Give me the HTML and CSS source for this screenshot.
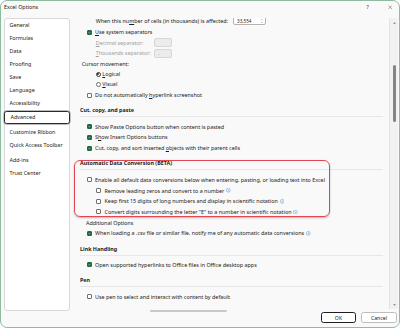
FILE: index.html
```html
<!DOCTYPE html>
<html lang="en">
<head>
    <meta charset="UTF-8">
    <title>Excel Options</title>
    <link rel="stylesheet" href="styles.css">
</head>
<body>
<div class="window">
    <div class="titlebar">
        <span class="title">Excel Options</span>
        <span class="help">?</span>
        <svg class="close" viewBox="0 0 10 10"><path d="M1 1 L9 9 M9 1 L1 9" stroke="#333" stroke-width="0.9" fill="none"/></svg>
    </div>
    <div class="body">
        <div class="nav">
            <div class="nav-item">General</div>
            <div class="nav-item">Formulas</div>
            <div class="nav-item">Data</div>
            <div class="nav-item">Proofing</div>
            <div class="nav-item">Save</div>
            <div class="nav-item">Language</div>
            <div class="nav-item">Accessibility</div>
            <div class="nav-item active">Advanced</div>
            <div class="nav-item">Customize Ribbon</div>
            <div class="nav-item">Quick Access Toolbar</div>
            <div class="nav-item group">Add-ins</div>
            <div class="nav-item">Trust Center</div>
        </div>
        <div class="right">
            <div class="scrollarea">
                <div class="content">
                    <div class="content-inner">
                        <div class="row first pad-text">
                            <span>When this nu<u>m</u>ber of cells (in thousands) is affected:</span>
                            <span class="spin">33,554
                                <svg class="spin-arrows" viewBox="0 0 6 10"><path d="M1.5 3.5 L3 2 L4.5 3.5 M1.5 6.5 L3 8 L4.5 6.5" stroke="#666" stroke-width="0.7" fill="none"/></svg>
                            </span>
                        </div>
                        <div class="row pad-cb"><span class="cb on"><svg viewBox="0 0 10 10"><path d="M2.2 5.2 L4.2 7.2 L7.9 3" stroke="#fff" stroke-width="1.4" fill="none"/></svg></span><span><u>U</u>se system separators</span></div>
                        <div class="row pad-text muted"><span class="sep-label"><u>D</u>ecimal separator:</span><span class="sep-box"></span></div>
                        <div class="row pad-text muted"><span class="sep-label"><u>T</u>housands separator:</span><span class="sep-box">,</span></div>
                        <div class="row pad-label">Cursor movement:</div>
                        <div class="row radio-row pad-radio"><span class="radio on"></span><span><u>L</u>ogical</span></div>
                        <div class="row pad-radio"><span class="radio"></span><span><u>V</u>isual</span></div>
                        <div class="row pad-cb"><span class="cb"></span><span>Do not automatically <u>h</u>yperlink screenshot</span></div>

                        <div class="heading">Cut, copy, and paste</div>
                        <div class="row pad-cb"><span class="cb on"><svg viewBox="0 0 10 10"><path d="M2.2 5.2 L4.2 7.2 L7.9 3" stroke="#fff" stroke-width="1.4" fill="none"/></svg></span><span>Show Paste Options button when content is pasted</span></div>
                        <div class="row pad-cb"><span class="cb on"><svg viewBox="0 0 10 10"><path d="M2.2 5.2 L4.2 7.2 L7.9 3" stroke="#fff" stroke-width="1.4" fill="none"/></svg></span><span>S<u>h</u>ow Insert Options buttons</span></div>
                        <div class="row pad-cb"><span class="cb on"><svg viewBox="0 0 10 10"><path d="M2.2 5.2 L4.2 7.2 L7.9 3" stroke="#fff" stroke-width="1.4" fill="none"/></svg></span><span>Cut, copy, and sort inserted <u>o</u>bjects with their parent cells</span></div>

                        <div class="heading">Automatic Data Conversion (BETA)</div>
                        <div class="row pad-cb"><span class="cb"></span><span>Enable all default data conversions below when entering, pasting, or loading text into Excel</span></div>
                        <div class="row pad-sub"><span class="cb"></span><span>Remove leading zeros and convert to a number</span><svg class="info" viewBox="0 0 10 10"><circle cx="5" cy="5" r="4.2" stroke="#2f7bd6" stroke-width="0.9" fill="none"/><path d="M5 4.3 V7.4" stroke="#2f7bd6" stroke-width="1"/><circle cx="5" cy="2.9" r="0.6" fill="#2f7bd6"/></svg></div>
                        <div class="row pad-sub"><span class="cb"></span><span>Keep first 15 digits of long numbers and display in scientific notation</span><svg class="info" viewBox="0 0 10 10"><circle cx="5" cy="5" r="4.2" stroke="#2f7bd6" stroke-width="0.9" fill="none"/><path d="M5 4.3 V7.4" stroke="#2f7bd6" stroke-width="1"/><circle cx="5" cy="2.9" r="0.6" fill="#2f7bd6"/></svg></div>
                        <div class="row pad-sub"><span class="cb"></span><span>Convert digits surrounding the letter "E" to a number in scientific notation</span><svg class="info" viewBox="0 0 10 10"><circle cx="5" cy="5" r="4.2" stroke="#2f7bd6" stroke-width="0.9" fill="none"/><path d="M5 4.3 V7.4" stroke="#2f7bd6" stroke-width="1"/><circle cx="5" cy="2.9" r="0.6" fill="#2f7bd6"/></svg></div>
                        <div class="row pad-extra">Additional Options</div>
                        <div class="row pad-cb"><span class="cb on"><svg viewBox="0 0 10 10"><path d="M2.2 5.2 L4.2 7.2 L7.9 3" stroke="#fff" stroke-width="1.4" fill="none"/></svg></span><span>When loading a .csv file or similar file, notify me of any automatic data conversions</span><svg class="info" viewBox="0 0 10 10"><circle cx="5" cy="5" r="4.2" stroke="#2f7bd6" stroke-width="0.9" fill="none"/><path d="M5 4.3 V7.4" stroke="#2f7bd6" stroke-width="1"/><circle cx="5" cy="2.9" r="0.6" fill="#2f7bd6"/></svg></div>

                        <div class="heading">Link Handling</div>
                        <div class="row pad-cb"><span class="cb on"><svg viewBox="0 0 10 10"><path d="M2.2 5.2 L4.2 7.2 L7.9 3" stroke="#fff" stroke-width="1.4" fill="none"/></svg></span><span>Open supported hyperlinks to Office files in Office desktop apps</span></div>

                        <div class="heading">Pen</div>
                        <div class="row pad-cb"><span class="cb"></span><span>Use pen to select and interact with content by default</span></div>
                    </div>
                </div>
                <div class="vscroll">
                    <svg class="arrow up" viewBox="0 0 6 4"><path d="M0.5 3.5 L3 0.5 L5.5 3.5 Z" fill="#666"/></svg>
                    <div class="thumb"></div>
                    <svg class="arrow down" viewBox="0 0 6 4"><path d="M0.5 0.5 L3 3.5 L5.5 0.5 Z" fill="#666"/></svg>
                </div>
                <div class="highlight"></div>
            </div>
            <div class="hscroll"><div class="hthumb"></div></div>
            <div class="footer">
                <button class="btn default">OK</button>
                <button class="btn">Cancel</button>
            </div>
        </div>
    </div>
</div>
</body>
</html>
```

FILE: styles.css
```css
/* Base */
* {
    margin: 0;
    padding: 0;
    box-sizing: border-box;
}

body {
    width: 400px;
    height: 328px;
    overflow: hidden;
    background: #fff;
    font-family: "Segoe UI", "Noto Sans", sans-serif;
    font-size: 5.4px;
    color: #1b1b1b;
}

u {
    text-decoration-thickness: 0.4px;
    text-underline-offset: 0.6px;
}

/* Dialog frame */
.window {
    width: 400px;
    height: 328px;
    border: 1px solid #8fbba0;
    border-radius: 7px;
    background: #f9f9f9;
    display: flex;
    flex-direction: column;
    overflow: hidden;
}

.titlebar {
    height: 17px;
    flex-shrink: 0;
    display: flex;
    align-items: flex-start;
    padding: 2px 0 0 3px;
    line-height: 8px;
}

.title {
    flex: 1;
}

.help {
    width: 4px;
    margin-right: 17px;
    color: #333;
}

.close {
    width: 4.5px;
    height: 4.5px;
    margin: 2px 7px 0 0;
}

.body {
    flex: 1;
    display: flex;
}

/* Left navigation */
.nav {
    width: 66px;
    height: 293px;
    margin-left: 3px;
    background: #fff;
    border: 1px solid #d8d8d8;
    border-radius: 3px;
}

.nav-item {
    height: 13px;
    line-height: 13px;
    padding-left: 4.5px;
    white-space: nowrap;
}

.nav-item.active {
    margin: 1px -1px 2px;
    padding-left: 5.5px;
    line-height: 11px;
    border: 1px solid #2b2b2b;
    border-radius: 2.5px;
    box-shadow: 0 0 0 0.4px #777;
}

.nav-item.group {
    margin-top: 2px;
}

/* Right side */
.right {
    flex: 1;
    display: flex;
    flex-direction: column;
    margin-left: 2px;
    padding-right: 1px;
}

.scrollarea {
    height: 291px;
    flex-shrink: 0;
    display: flex;
    position: relative;
}

.content {
    flex: 1;
    overflow: hidden;
    padding: 0 6px 0 8px;
}

.content-inner {
    margin-top: -3.3px;
}

.row {
    height: 10.7px;
    display: flex;
    align-items: center;
    white-space: nowrap;
}

.row.first {
    height: 12px;
}

.row.radio-row {
    height: 9.6px;
}

.pad-text { padding-left: 15.7px; }
.pad-cb { padding-left: 6.5px; }
.pad-sub { padding-left: 16px; }
.pad-radio { padding-left: 15.5px; }
.pad-label { padding-left: 1.7px; }
.pad-extra { padding-left: 6px; }

.muted {
    color: #a0a0a0;
}

.heading {
    height: 12px;
    line-height: 12px;
    margin: 4px 0 4px;
    font-weight: bold;
    border-bottom: 1px solid #e7e7e7;
    box-sizing: content-box;
}

/* Controls */
.cb {
    width: 5px;
    height: 5px;
    margin-right: 3.5px;
    flex-shrink: 0;
    border: 0.7px solid #6f6f6f;
    border-radius: 1px;
    background: #fff;
    display: flex;
}

.cb.on {
    background: #1e6b40;
    border-color: #1e6b40;
}

.cb svg {
    width: 100%;
    height: 100%;
}

.radio {
    width: 5px;
    height: 5px;
    margin-right: 1.8px;
    flex-shrink: 0;
    border: 0.7px solid #6f6f6f;
    border-radius: 50%;
    background: #fff;
    display: flex;
    align-items: center;
    justify-content: center;
}

.radio.on {
    border-color: #333;
}

.radio.on::after {
    content: "";
    width: 2.4px;
    height: 2.4px;
    border-radius: 50%;
    background: #222;
}

.info {
    width: 4.6px;
    height: 4.6px;
    margin-left: 2px;
    flex-shrink: 0;
}

.spin {
    width: 33px;
    height: 9px;
    margin-left: 5px;
    padding-left: 3px;
    display: flex;
    align-items: center;
    justify-content: space-between;
    border: 0.7px solid #b3b3b3;
    border-radius: 2px;
    background: #fff;
    font-size: 4.6px;
}

.spin-arrows {
    width: 3.5px;
    height: 6px;
    margin-right: 1.5px;
}

.sep-label {
    width: 58.3px;
}

.sep-box {
    width: 18px;
    height: 9px;
    border: 0.7px solid #d6d6d6;
    border-radius: 2px;
    background: #ececec;
    line-height: 7px;
    padding-left: 3px;
}

/* Scrollbars */
.vscroll {
    width: 9px;
    background: #f1f1f1;
    border-left: 0.5px solid #e4e4e4;
    position: relative;
}

.arrow {
    position: absolute;
    left: 2.5px;
    width: 3px;
    height: 2px;
}

.arrow.up { top: 4px; }
.arrow.down { top: 286px; }

.thumb {
    position: absolute;
    left: 2.5px;
    top: 47px;
    width: 3.4px;
    height: 57px;
    border-radius: 2px;
    background: #858585;
}

.hscroll {
    height: 3px;
    flex-shrink: 0;
}

.hthumb {
    width: 77px;
    height: 2px;
    margin: 0.5px 0 0 78px;
    border-radius: 1px;
    background: #c8c8c8;
}

/* Red annotation box */
.highlight {
    position: absolute;
    left: 2px;
    top: 142px;
    width: 256px;
    height: 57px;
    border: 1.6px solid #e2474f;
    border-radius: 6px;
    box-shadow: 0 1px 2px rgba(0, 0, 0, 0.25);
    pointer-events: none;
}

/* Buttons */
.footer {
    flex: 1;
    display: flex;
    justify-content: flex-end;
    align-items: flex-start;
    gap: 5px;
    padding-right: 1px;
}

.btn {
    height: 11px;
    font-family: inherit;
    font-size: 5.2px;
    color: #1b1b1b;
    background: #fff;
    border: 0.7px solid #bdbdbd;
    border-radius: 2.5px;
    width: 36px;
}

.btn.default {
    width: 35px;
    border: 1.2px solid #1f1f1f;
}
```
